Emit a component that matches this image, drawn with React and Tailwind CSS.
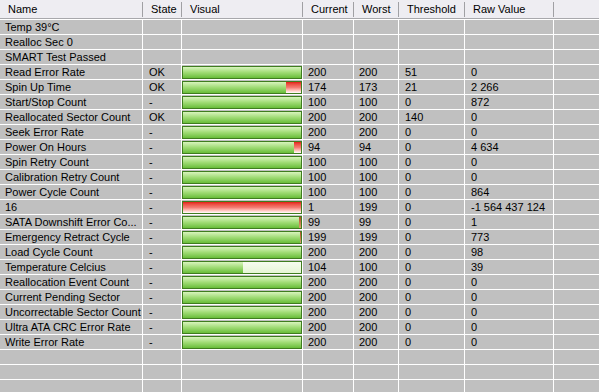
import { Fragment } from 'react';

const cols = ['Name', 'State', 'Visual', 'Current', 'Worst', 'Threshold', 'Raw Value', ''];

// g = green px inside the bar (of 118), rest = what fills the remainder
const rows = [
  { name: 'Temp 39°C' },
  { name: 'Realloc Sec 0' },
  { name: 'SMART Test Passed' },
  { name: 'Read Error Rate', state: 'OK', g: 118, cur: '200', worst: '200', thr: '51', raw: '0' },
  { name: 'Spin Up Time', state: 'OK', g: 103, rest: 'red', cur: '174', worst: '173', thr: '21', raw: '2 266' },
  { name: 'Start/Stop Count', state: '-', g: 118, cur: '100', worst: '100', thr: '0', raw: '872' },
  { name: 'Reallocated Sector Count', state: 'OK', g: 118, cur: '200', worst: '200', thr: '140', raw: '0' },
  { name: 'Seek Error Rate', state: '-', g: 118, cur: '200', worst: '200', thr: '0', raw: '0' },
  { name: 'Power On Hours', state: '-', g: 111, rest: 'red', cur: '94', worst: '94', thr: '0', raw: '4 634' },
  { name: 'Spin Retry Count', state: '-', g: 118, cur: '100', worst: '100', thr: '0', raw: '0' },
  { name: 'Calibration Retry Count', state: '-', g: 118, cur: '100', worst: '100', thr: '0', raw: '0' },
  { name: 'Power Cycle Count', state: '-', g: 118, cur: '100', worst: '100', thr: '0', raw: '864' },
  { name: '16', state: '-', g: 0, rest: 'red', cur: '1', worst: '199', thr: '0', raw: '-1 564 437 124' },
  { name: 'SATA Downshift Error Co...', state: '-', g: 116, rest: 'brown', cur: '99', worst: '99', thr: '0', raw: '1' },
  { name: 'Emergency Retract Cycle', state: '-', g: 117, rest: 'brown', cur: '199', worst: '199', thr: '0', raw: '773' },
  { name: 'Load Cycle Count', state: '-', g: 118, cur: '200', worst: '200', thr: '0', raw: '98' },
  { name: 'Temperature Celcius', state: '-', g: 60, rest: 'pale', cur: '104', worst: '100', thr: '0', raw: '39' },
  { name: 'Reallocation Event Count', state: '-', g: 118, cur: '200', worst: '200', thr: '0', raw: '0' },
  { name: 'Current Pending Sector', state: '-', g: 118, cur: '200', worst: '200', thr: '0', raw: '0' },
  { name: 'Uncorrectable Sector Count', state: '-', g: 118, cur: '200', worst: '200', thr: '0', raw: '0' },
  { name: 'Ultra ATA CRC Error Rate', state: '-', g: 118, cur: '200', worst: '200', thr: '0', raw: '0' },
  { name: 'Write Error Rate', state: '-', g: 118, cur: '200', worst: '200', thr: '0', raw: '0' },
  {},
  {},
  {},
];

const grid = 'grid grid-cols-[142px_1px_38px_1px_120px_1px_50px_1px_44px_1px_65px_1px_88px_1px_1fr]';

function Bar({ g, rest }) {
  return (
    <div className="mt-px h-[13px] w-full border border-[#3f7d1f] flex overflow-hidden">
      <div className="h-full bg-gradient-to-b from-[#d8f4bc] via-[#9fdb74] to-[#68bd38]" style={{ width: g }} />
      {rest === 'red' && <div className="h-full flex-1 bg-gradient-to-b from-[#e41c14] via-[#f47c74] to-white" />}
      {rest === 'brown' && <div className="h-full flex-1 bg-gradient-to-b from-[#b0502c] to-[#d8a070]" />}
      {rest === 'pale' && <div className="h-full flex-1 bg-gradient-to-b from-[#f6fcef] to-[#e6f5d6]" />}
    </div>
  );
}

function Cell({ children, className = '' }) {
  return <div className={`h-[14px] bg-[#c0c0c0] pl-[5px] leading-[14px] whitespace-nowrap overflow-hidden ${className}`}>{children}</div>;
}

function Line() {
  return <div className="bg-white" />;
}

export default function App() {
  return (
    <div className="w-[599px] h-[392px] overflow-hidden bg-[#c0c0c0] text-[11px] text-black" style={{ fontFamily: '"Liberation Sans", Arial, sans-serif' }}>
      <div className={`${grid} h-[19px] bg-[#eeedf2] border-b border-[#a8a8ac]`}>
        {cols.map((c, i) => (
          <Fragment key={i}>
            <div className="pl-[8px] leading-[18px] whitespace-nowrap">{c}</div>
            {i < cols.length - 1 && <div className="bg-[#a0a0a4] mt-[2px] mb-[1px]" />}
          </Fragment>
        ))}
      </div>
      {rows.map((r, i) => (
        <div key={i} className={`${grid} border-t border-white`}>
          <Cell>{r.name}</Cell>
          <Line />
          <Cell className="pl-[6px]">{r.state}</Cell>
          <Line />
          <div className="h-[14px] bg-[#c0c0c0]">{r.g !== undefined && <Bar g={r.g} rest={r.rest} />}</div>
          <Line />
          <Cell>{r.cur}</Cell>
          <Line />
          <Cell>{r.worst}</Cell>
          <Line />
          <Cell className="pl-[6px]">{r.thr}</Cell>
          <Line />
          <Cell className="pl-[6px]">{r.raw}</Cell>
          <Line />
          <Cell />
        </div>
      ))}
    </div>
  );
}
